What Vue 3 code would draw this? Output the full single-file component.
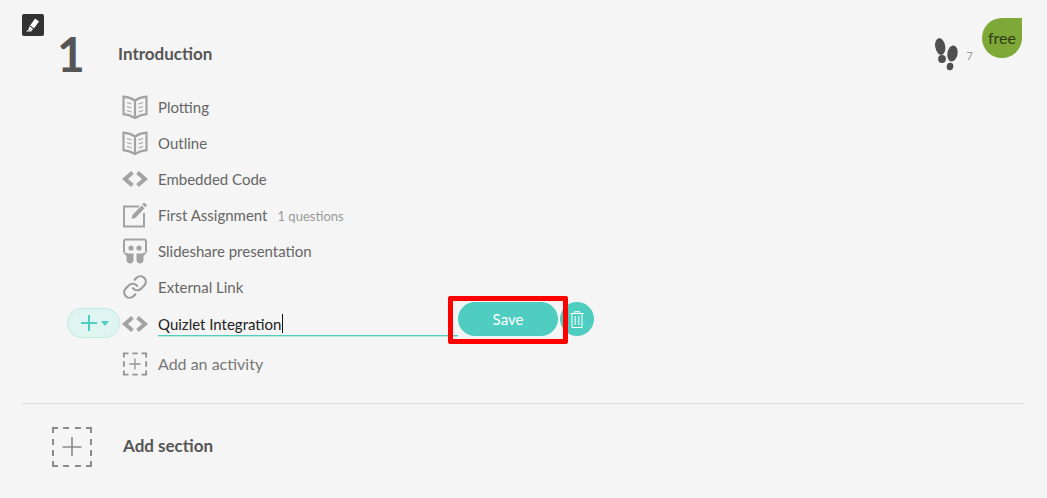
<template>
  <div class="page">
    <section class="chapter">
      <button class="edit" aria-label="Edit">
        <svg width="16" height="16" viewBox="0 0 16 16"><path d="M10.200 1.600 14 4.400 9 11.200 5 8.400z" fill="#fff"/><path d="M4.400 9.200 8.200 12l-1.500 1.400-3.400-.6z" fill="#fff"/><path d="M2 13.200h4.500v1.200H1.400z" fill="#fff"/></svg>
      </button>
      <header class="head">
        <span class="num">1</span>
        <h2 class="title">Introduction</h2>
        <div class="stats">
          <svg class="steps" width="24" height="33" viewBox="0 0 24 33" fill="#505050">
            <ellipse cx="5.200" cy="8.500" rx="5" ry="8.500" transform="rotate(-10 5.200 8.500)"/>
            <ellipse cx="7" cy="21" rx="3.900" ry="3.900"/>
            <ellipse cx="17.500" cy="15.500" rx="5.100" ry="8" transform="rotate(10 17.500 15.500)"/>
            <ellipse cx="15" cy="28.500" rx="3.300" ry="3.800" transform="rotate(10 15 28.500)"/>
          </svg>
          <span class="count">7</span>
        </div>
        <div class="free">free</div>
      </header>

      <ul class="list">
        <li v-for="a in activities" :key="a.label" class="row">
          <span class="ico">
            <svg v-if="a.icon === 'book'" width="26" height="26" viewBox="0 0 26 26" fill="none" stroke="#a3a3a3" stroke-width="2.200">
              <path d="M13 6.500C10 4.400 6 3 1.500 2.600v17.600c4.500.5 8.500 2 11.500 3.800 3-1.800 7-3.300 11.500-3.800V2.600C20 3 16 4.400 13 6.500zM13 6.500V24"/>
              <path d="M5 8.500l4.500 1.500M5 12.500l4.500 1.500M5 16.500l4.500 1.500M21 8.500 16.500 10M21 12.500 16.500 14M21 16.500 16.500 18" stroke-width="1.300"/>
            </svg>
            <svg v-else-if="a.icon === 'code'" width="26" height="16" viewBox="0 0 26 16" fill="none" stroke="#a3a3a3" stroke-width="4">
              <path d="M10.500 1.500 3 8l7.500 6.500M15.500 1.500 23 8l-7.500 6.500"/>
            </svg>
            <svg v-else-if="a.icon === 'task'" width="26" height="26" viewBox="0 0 26 26" fill="none">
              <path d="M17 4.500H2v20h20V11" stroke="#a3a3a3" stroke-width="2"/>
              <path d="M22 .5l3 2.800-1.700 1.900-3-2.800zM19.500 3.500l3 2.800-8.800 9.400-4.200 1.400 1-4.200z" fill="#a3a3a3"/>
            </svg>
            <svg v-else-if="a.icon === 'slides'" width="26" height="26" viewBox="0 0 26 26" fill="#a3a3a3">
              <path d="M4 .5h18a3 3 0 0 1 3 3v10.500h-2V3.500a1 1 0 0 0-1-1H4a1 1 0 0 0-1 1V14H1V3.500a3 3 0 0 1 3-3z"/>
              <path d="M1 13.500c2.500 1.500 5 2 7 2h3.500V21a3.700 3.700 0 0 1-3.700 4.500A3.700 3.700 0 0 1 4.500 21v-3.200C3 17 1.800 15.500 1 13.500zM25 13.500c-2.500 1.500-5 2-7 2h-3.500V21a3.700 3.700 0 0 0 3.700 4.500 3.700 3.700 0 0 0 3.300-4.500v-3.200c1.500-.8 2.700-2.300 3.500-4.300z"/>
              <circle cx="9" cy="10" r="2.600"/><circle cx="17" cy="10" r="2.600"/>
            </svg>
            <svg v-else width="28" height="28" viewBox="0 0 24 24" fill="none" stroke="#9c9c9c" stroke-width="2" stroke-linecap="round">
              <path d="M10 13a5 5 0 0 0 7.540.54l3-3a5 5 0 0 0-7.070-7.070l-1.720 1.710"/>
              <path d="M14 11a5 5 0 0 0-7.540-.54l-3 3a5 5 0 0 0 7.070 7.070l1.710-1.710"/>
            </svg>
          </span>
          <span class="label">{{ a.label }}</span>
          <span v-if="a.note" class="note">{{ a.note }}</span>
        </li>

        <li class="row editing">
          <button class="add-pill" aria-label="Add">
            <svg width="18" height="18" viewBox="0 0 18 18" stroke="#4ecdc0" stroke-width="2"><path d="M9 1v16M1 9h16"/></svg>
            <span class="caret"></span>
          </button>
          <span class="ico">
            <svg width="26" height="16" viewBox="0 0 26 16" fill="none" stroke="#a3a3a3" stroke-width="4"><path d="M10.500 1.500 3 8l7.500 6.500M15.500 1.500 23 8l-7.500 6.500"/></svg>
          </span>
          <div class="field">
            <span class="typed">Quizlet Integration</span><span class="cursor"></span>
          </div>
          <div class="actions">
            <button class="save">Save</button>
            <button class="trash" aria-label="Delete">
              <svg width="14" height="17" viewBox="0 0 14 17" fill="none" stroke="#fff" stroke-width="1"><path d="M.5 2.500h13M4.500 2.500V.7h5v1.800M2 2.500v14h10v-14M5.200 5v9M8.800 5v9"/></svg>
            </button>
            <span class="highlight"></span>
          </div>
        </li>

        <li class="row add-row">
          <span class="ico">
            <svg width="28" height="26" viewBox="0 0 28 26" fill="none" stroke="#949494" stroke-width="2">
              <path d="M2 6V1.500h5M11 1.500h6M21 1.500h5V6M26 10v6M26 20v4.500h-5M17 24.500h-6M7 24.500H2V20M2 16v-6" />
              <path d="M14 7v12M8 13h12" stroke-width="1.400"/>
            </svg>
          </span>
          <span class="label muted">Add an activity</span>
        </li>
      </ul>
    </section>

    <footer class="add-section">
      <svg width="40" height="40" viewBox="0 0 40 40" fill="none" stroke="#8b8b8b" stroke-width="2">
        <path d="M1 6V1h5M11 1h6M23 1h6M34 1h5v5M39 12v6M39 23v6M39 34v5h-5M29 39h-6M17 39h-6M6 39H1v-5M1 29v-6M1 18v-6"/>
        <path d="M20 10v19M10.500 20h19" stroke-width="1.600"/>
      </svg>
      <span class="section-label">Add section</span>
    </footer>
  </div>
</template>

<script setup>
const activities = [
  { icon: 'book', label: 'Plotting' },
  { icon: 'book', label: 'Outline' },
  { icon: 'code', label: 'Embedded Code' },
  { icon: 'task', label: 'First Assignment', note: '1 questions' },
  { icon: 'slides', label: 'Slideshare presentation' },
  { icon: 'link', label: 'External Link' }
]
</script>

<style>
html, body { margin: 0; background: #f5f5f5; }
</style>

<style scoped>
.page {
  width: 1047px;
  height: 498px;
  box-sizing: border-box;
  padding: 0 23px 0 22px;
  background: #f5f5f5;
  font-family: Lato, "Open Sans", sans-serif;
  color: #666;
  overflow: hidden;
}
.chapter { position: relative; padding-top: 18px; border-bottom: 1px solid #dcdcdc; height: 385px; }
.edit {
  position: absolute;
  left: 0;
  top: 14px;
  width: 22px;
  height: 22px;
  padding: 3px;
  border: 0;
  border-radius: 2px;
  background: #333;
  display: flex;
  align-items: center;
  justify-content: center;
}
.head { display: flex; align-items: center; height: 71px; position: relative; }
.num {
  width: 96px;
  box-sizing: border-box;
  padding-left: 35px;
  font-size: 48px;
  font-weight: 700;
  color: #555;
  line-height: 71px;
}
.title { margin: 0; font-size: 17px; font-weight: 700; color: #555; line-height: 71px; }
.stats { margin-left: auto; margin-right: 51px; display: flex; align-items: flex-end; gap: 8px; height: 33px; margin-top: 1px; }
.count { font-size: 11px; color: #999; line-height: 14px; margin-bottom: 8px; }
.free {
  position: absolute;
  right: 2px;
  top: 0;
  width: 40px;
  height: 40px;
  border-radius: 50% 0 50% 50%;
  background: #7ea838;
  color: #2c3a14;
  font-size: 16px;
  line-height: 40px;
  text-align: center;
}
.list { list-style: none; margin: 0; padding: 0 0 0 100px; }
.row { display: flex; align-items: center; height: 36px; font-size: 15px; }
.ico { width: 26px; display: flex; justify-content: center; margin-right: 10px; flex: none; }
.label { color: #666; }
.note { margin-left: 10px; margin-top: 2px; font-size: 13px; color: #999; }
.editing { position: relative; height: 37px; }
.add-pill {
  position: absolute;
  left: -55px;
  top: 3px;
  width: 53px;
  height: 30px;
  padding: 0 0 0 2px;
  box-sizing: border-box;
  border: 1px solid #bfe9e4;
  border-radius: 15px;
  background: #dff5f2;
  display: flex;
  align-items: center;
  justify-content: center;
  gap: 3px;
}
.caret { width: 0; height: 0; border: 4px solid transparent; border-top: 5px solid #4ecdc0; border-bottom: 0; }
.field {
  width: 300px;
  height: 25px;
  box-sizing: border-box;
  border-bottom: 1px solid #4ecdc0;
  box-shadow: 0 1px 0 rgba(78, 205, 192, 0.35);
  display: flex;
  align-items: center;
  padding-top: 1px;
}
.typed { color: #222; }
.cursor { width: 1px; height: 19px; background: #111; }
.actions { position: relative; display: flex; align-items: center; margin-top: -9px; }
.save {
  width: 100px;
  height: 34px;
  border: 0;
  border-radius: 17px;
  background: #4ecdc0;
  color: #fff;
  font: 15px Lato, sans-serif;
  position: relative;
  z-index: 2;
}
.trash {
  width: 34px;
  height: 34px;
  margin-left: 2px;
  padding: 0;
  border: 0;
  border-radius: 50%;
  background: #4ecdc0;
  display: flex;
  align-items: center;
  justify-content: center;
}
.highlight {
  position: absolute;
  left: -10px;
  top: -6px;
  width: 120px;
  height: 48px;
  box-sizing: border-box;
  border: 5px solid #f00;
  border-radius: 2px;
  z-index: 3;
}
.add-row { height: 44px; }
.muted { font-size: 16px; color: #777; margin-top: -2px; }
.add-section {
  display: flex;
  align-items: center;
  gap: 31px;
  padding: 23px 0 0 30px;
}
.section-label {
  font-size: 17px;
  font-weight: 700;
  color: #555;
  margin-top: -4px;
}
</style>
